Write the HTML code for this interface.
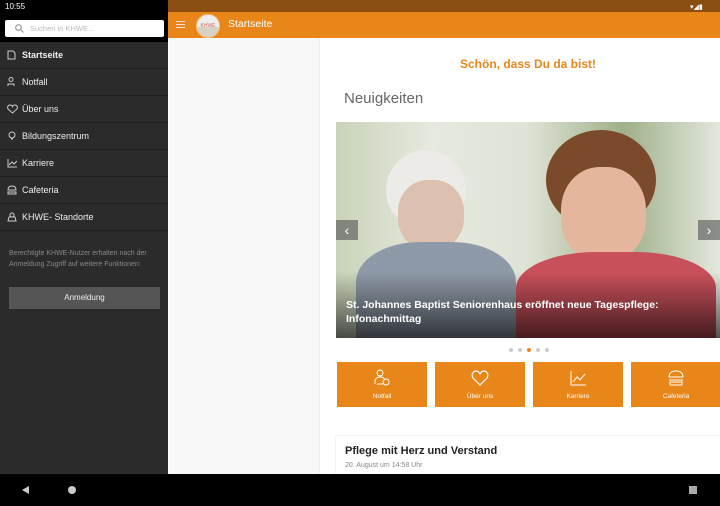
<!DOCTYPE html>
<html><head><meta charset="utf-8"><style>
*{margin:0;padding:0;box-sizing:border-box}
body{width:720px;height:506px;overflow:hidden;position:relative;font-family:"Liberation Sans",sans-serif;background:#fff}
.abs{position:absolute}
.drawer{left:0;top:0;width:168px;height:474px;background:#2b2b2b}
.item{position:absolute;left:0;width:168px;height:27px;border-bottom:1px solid #1f1f1f;color:#eee;font-size:9px;line-height:27px;padding-left:22px}
.item svg{position:absolute;left:7px;top:8px}
.tile{position:absolute;top:362px;width:90px;height:45px;background:#e8861a;color:#fff;font-size:6.5px;text-align:center}
.tile span{position:absolute;left:0;right:0;top:31px}
.tile svg{position:absolute;left:36px;top:7px}
</style></head><body>
<div class="abs" style="left:168px;top:0;width:552px;height:12px;background:#8a4f10"></div>
<div class="abs" style="left:168px;top:12px;width:552px;height:26px;background:#e8861a"></div>
<div class="abs" style="left:176px;top:21px;width:9px;height:1px;background:#fdd;box-shadow:0 3px #fdd,0 6px #fdd"></div>
<div class="abs" style="left:196px;top:14px;width:24px;height:24px;border-radius:50%;background:linear-gradient(#eee 55%,#d8d0c4 55%);border:1px solid #f4c58a;font-size:5px;color:#c66;text-align:center;line-height:22px">KHWE</div>
<div class="abs" style="left:228px;top:18px;color:#fff;font-size:10.5px">Startseite</div>
<div class="abs" style="left:169px;top:38px;width:151px;height:436px;background:#f8f8f8;border-right:1px solid #eee"></div>
<div class="abs" style="left:336px;top:57px;width:384px;text-align:center;color:#e8861a;font-weight:bold;font-size:12px">Schön, dass Du da bist!</div>
<div class="abs" style="left:344px;top:90px;color:#666;font-size:15px">Neuigkeiten</div>
<div class="abs" style="left:336px;top:122px;width:384px;height:216px;overflow:hidden;background:linear-gradient(90deg,#c9d3b8 0%,#e6e9df 25%,#dfe3d6 50%,#9fb08a 75%,#e4e8de 100%)">
 <div class="abs" style="left:50px;top:28px;width:80px;height:80px;border-radius:50%;background:#ecebe8"></div>
 <div class="abs" style="left:62px;top:58px;width:66px;height:70px;border-radius:45%;background:#dcc0b0"></div>
 <div class="abs" style="left:20px;top:120px;width:160px;height:100px;border-radius:40% 40% 0 0;background:#8f9aa8"></div>
 <div class="abs" style="left:210px;top:8px;width:110px;height:100px;border-radius:50%;background:#7a4a2a"></div>
 <div class="abs" style="left:225px;top:45px;width:85px;height:95px;border-radius:45%;background:#e4b69e"></div>
 <div class="abs" style="left:180px;top:130px;width:200px;height:90px;border-radius:40% 40% 0 0;background:#c8505a"></div>
 <div class="abs" style="left:0;top:150px;width:384px;height:66px;background:linear-gradient(rgba(0,0,0,0),rgba(0,0,0,.65))"></div>
 <div class="abs" style="left:0;top:98px;width:22px;height:20px;background:rgba(80,80,80,.6);color:#fff;font-size:14px;text-align:center;line-height:20px">‹</div>
 <div class="abs" style="left:362px;top:98px;width:22px;height:20px;background:rgba(80,80,80,.6);color:#fff;font-size:14px;text-align:center;line-height:20px">›</div>
 <div class="abs" style="left:10px;top:176px;width:360px;color:#fff;font-weight:bold;font-size:10.5px;line-height:14px">St. Johannes Baptist Seniorenhaus eröffnet neue Tagespflege: Infonachmittag</div>
</div>
<div class="abs" style="left:509px;top:348px;width:4px;height:4px;border-radius:50%;background:#ccc;box-shadow:9px 0 #ccc,18px 0 #e8861a,27px 0 #ccc,36px 0 #ccc"></div>
<div class="tile" style="left:337px"><svg width="18" height="18" viewBox="0 0 18 18" fill="none" stroke="#fff" stroke-width="1"><circle cx="7" cy="4" r="3"/><path d="M2 15v-3c0-2 2-4 5-4s4 1 5 3M4 15h6"/><circle cx="13" cy="13" r="3"/></svg><span>Notfall</span></div>
<div class="tile" style="left:435px"><svg width="18" height="18" viewBox="0 0 18 18" fill="none" stroke="#fff" stroke-width="1.2"><path d="M9 16L2 9C0 6 2 2 5 2c2 0 3 1 4 3 1-2 2-3 4-3 3 0 5 4 3 7z"/></svg><span>Über uns</span></div>
<div class="tile" style="left:533px"><svg width="18" height="18" viewBox="0 0 18 18" fill="none" stroke="#fff" stroke-width="1"><path d="M2 2v14h15M4 13l4-5 3 3 5-6"/></svg><span>Karriere</span></div>
<div class="tile" style="left:631px"><svg width="18" height="18" viewBox="0 0 18 18" fill="none" stroke="#fff" stroke-width="1"><path d="M2 8c0-4 3-6 7-6s7 2 7 6zM2 11h14M3 13h12v3H3z"/></svg><span>Cafeteria</span></div>
<div class="abs" style="left:336px;top:436px;width:384px;height:38px;background:#fff;box-shadow:0 0 2px #ddd"></div>
<div class="abs" style="left:345px;top:445px;color:#222;font-weight:bold;font-size:11px">Pflege mit Herz und Verstand</div>
<div class="abs" style="left:345px;top:462px;color:#888;font-size:7px">20. August um 14:58 Uhr</div>

<div class="abs drawer">
 <div class="abs" style="left:0;top:0;width:168px;height:42px;background:#000"></div>
 <div class="abs" style="left:5px;top:2px;color:#fff;font-size:8px">10:55</div>
 <div class="abs" style="left:5px;top:20px;width:159px;height:17px;background:#fff;border-radius:2px;color:#bbb;font-size:7.5px;line-height:17px;padding-left:25px">Suchen in KHWE...</div>
 <svg class="abs" style="left:15px;top:24px" width="9" height="9" viewBox="0 0 9 9" fill="none" stroke="#888"><circle cx="3.5" cy="3.5" r="2.8"/><path d="M5.5 5.5L8.5 8.5"/></svg>
 <div class="item" style="top:42px;font-weight:bold"><svg width="9" height="10" fill="none" stroke="#ccc"><path d="M1 1h5l2 2v6H1z"/></svg>Startseite</div>
 <div class="item" style="top:69px"><svg width="10" height="10" fill="none" stroke="#ccc"><circle cx="4" cy="2.5" r="2"/><path d="M1 9V7h6v2"/></svg>Notfall</div>
 <div class="item" style="top:96px"><svg width="11" height="10" fill="none" stroke="#ccc"><path d="M5.5 9L1 5C0 3 1 1 3 1s2.5 1.5 2.5 1.5S6 1 8 1s3 2 2 4z"/></svg>Über uns</div>
 <div class="item" style="top:123px"><svg width="10" height="10" fill="none" stroke="#ccc"><circle cx="5" cy="4" r="3"/><path d="M4 8h2"/></svg>Bildungszentrum</div>
 <div class="item" style="top:150px"><svg width="10" height="10" fill="none" stroke="#ccc"><path d="M1 1v8h9M2 7l3-3 2 2 3-3"/></svg>Karriere</div>
 <div class="item" style="top:177px"><svg width="10" height="10" fill="none" stroke="#ccc"><path d="M1 5c0-3 2-4 4-4s4 1 4 4zM1 7h8v2H1z"/></svg>Cafeteria</div>
 <div class="item" style="top:204px"><svg width="10" height="10" fill="none" stroke="#ccc"><path d="M1 9l1-4h6l1 4z"/><circle cx="5" cy="3" r="2"/></svg>KHWE- Standorte</div>
 <div class="abs" style="left:9px;top:248px;width:150px;color:#888;font-size:7px;line-height:11px">Berechtigte KHWE-Nutzer erhalten nach der Anmeldung Zugriff auf weitere Funktionen:</div>
 <div class="abs" style="left:9px;top:287px;width:151px;height:22px;background:#555;color:#eee;font-size:8px;text-align:center;line-height:22px">Anmeldung</div>
</div>
<div class="abs" style="left:690px;top:3px;color:#fff;font-size:7px">▾◢▮</div>
<div class="abs" style="left:0;top:474px;width:720px;height:32px;background:#000"></div>
<div class="abs" style="left:22px;top:486px;width:0;height:0;border-top:4px solid transparent;border-bottom:4px solid transparent;border-right:7px solid #ccc"></div>
<div class="abs" style="left:68px;top:486px;width:8px;height:8px;border-radius:50%;background:#ccc"></div>
<div class="abs" style="left:689px;top:486px;width:8px;height:8px;background:#aaa"></div>
</body></html>
